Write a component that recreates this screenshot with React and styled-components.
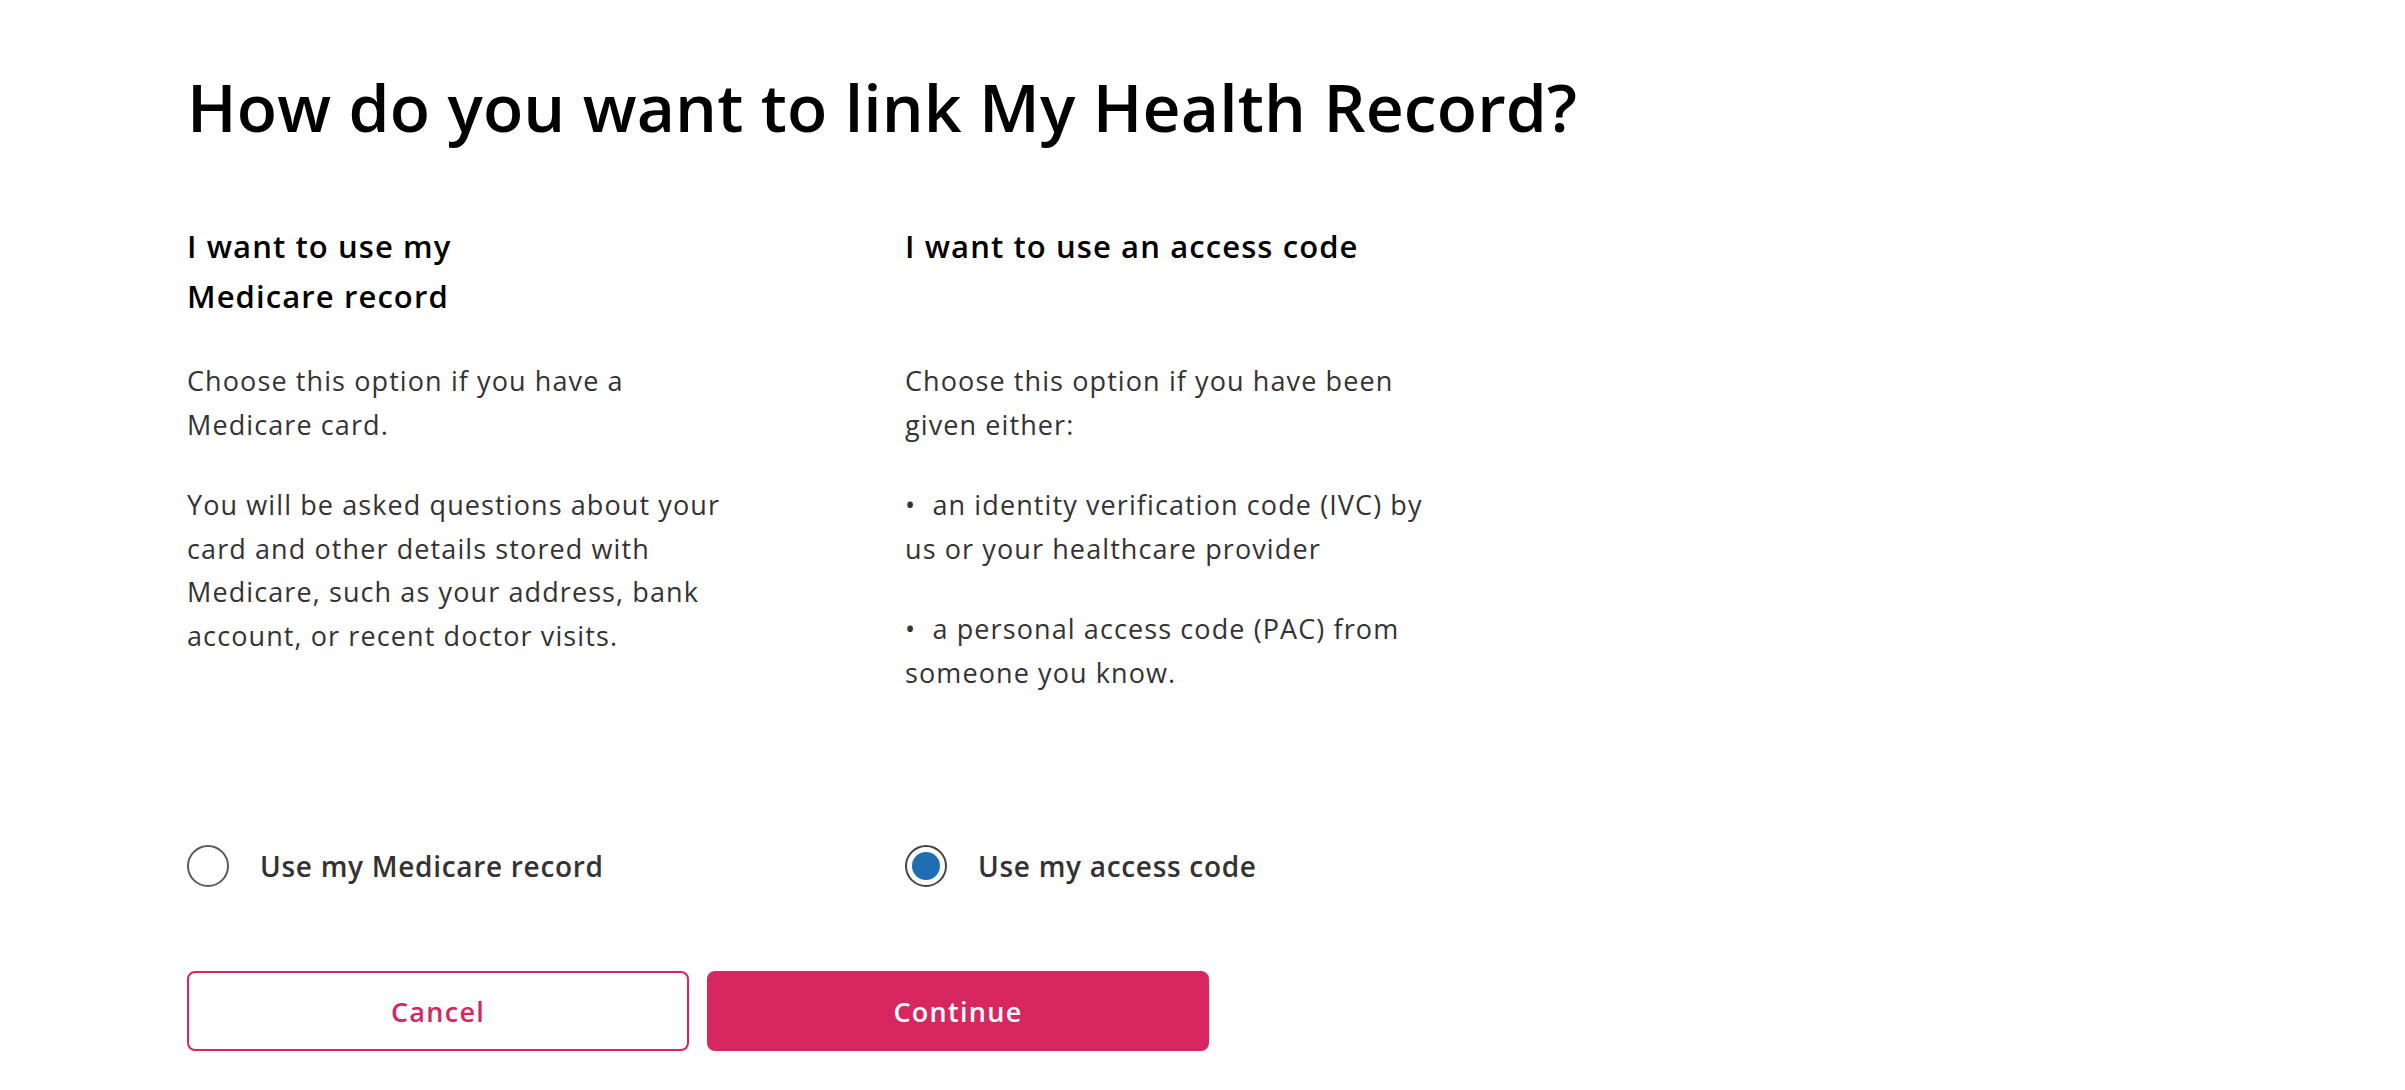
import { useState } from "react";
import styled, { createGlobalStyle } from "styled-components";

const GlobalStyle = createGlobalStyle`
  body {
    margin: 0;
    background: #fff;
    font-family: "Open Sans", "Noto Sans", sans-serif;
  }
`;

const options = [
  {
    id: "medicare",
    heading: (
      <>
        I want to use my
        <br />
        Medicare record
      </>
    ),
    label: "Use my Medicare record",
  },
  {
    id: "code",
    heading: "I want to use an access code",
    label: "Use my access code",
  },
];

const bullets = [
  "an identity verification code (IVC) by us or your healthcare provider",
  "a personal access code (PAC) from someone you know.",
];

const App = () => {
  const [choice, setChoice] = useState("code");

  return (
    <Page>
      <GlobalStyle />
      <Title>How do you want to link My Health Record?</Title>

      <Grid>
        <Heading>{options[0].heading}</Heading>
        <Heading>{options[1].heading}</Heading>

        <Body>
          <Para>Choose this option if you have a Medicare card.</Para>
          <Para>
            You will be asked questions about your card and other details
            stored with Medicare, such as your address, bank account, or recent
            doctor visits.
          </Para>
        </Body>
        <Body>
          <Para>Choose this option if you have been given either:</Para>
          {bullets.map((b) => (
            <Para key={b}>{"\u2022\u00a0\u00a0" + b}</Para>
          ))}
        </Body>

        {options.map((o) => (
          <RadioRow key={o.id} onClick={() => setChoice(o.id)}>
            <Radio $checked={choice === o.id} />
            <RadioLabel>{o.label}</RadioLabel>
          </RadioRow>
        ))}
      </Grid>

      <Actions>
        <Button $variant="outline">Cancel</Button>
        <Button>Continue</Button>
      </Actions>
    </Page>
  );
};

const Page = styled.div`
  padding: 67px 0 0 187px;
`;

const Title = styled.h1`
  margin: 0;
  font-size: 66px;
  line-height: 79px;
  font-weight: 600;
  color: #000;
  letter-spacing: 0.15px;
`;

const Grid = styled.div`
  display: grid;
  grid-template-columns: 548px 548px;
  column-gap: 170px;
  margin-top: 75px;
`;

const Heading = styled.h2`
  margin: 0;
  font-size: 31px;
  line-height: 50px;
  font-weight: 600;
  color: #000;
  letter-spacing: 1.1px;
`;

const Body = styled.div`
  padding-top: 38px;
  padding-bottom: 151px;
`;

const Para = styled.p`
  margin: 0 0 37px;
  font-size: 27px;
  line-height: 43.5px;
  color: #333;
  letter-spacing: 1.1px;

  &:last-child {
    margin-bottom: 0;
  }
`;

const RadioRow = styled.label`
  display: flex;
  align-items: center;
  gap: 31px;
  cursor: pointer;
`;

const Radio = styled.span`
  position: relative;
  width: 42px;
  height: 42px;
  box-sizing: border-box;
  border-radius: 50%;
  border: 2px solid ${(p) => (p.$checked ? "#444" : "#5a5a5a")};
  background: #fff;
  flex: none;

  &::after {
    content: "";
    position: absolute;
    inset: 5px;
    border-radius: 50%;
    background: #1f6db3;
    display: ${(p) => (p.$checked ? "block" : "none")};
  }
`;

const RadioLabel = styled.span`
  font-size: 28px;
  font-weight: 600;
  color: #333;
  letter-spacing: 0.7px;
`;

const Actions = styled.div`
  display: flex;
  gap: 18px;
  margin-top: 84px;
`;

const Button = styled.button`
  width: 502px;
  height: 80px;
  box-sizing: border-box;
  border-radius: 8px;
  font-family: "Open Sans", "Noto Sans", sans-serif;
  font-size: 27px;
  font-weight: 600;
  letter-spacing: 1.3px;
  cursor: pointer;
  border: 2px solid #d72660;
  background: ${(p) => (p.$variant === "outline" ? "#fff" : "#d72660")};
  color: ${(p) => (p.$variant === "outline" ? "#d72660" : "#fff")};
`;

export default App;
